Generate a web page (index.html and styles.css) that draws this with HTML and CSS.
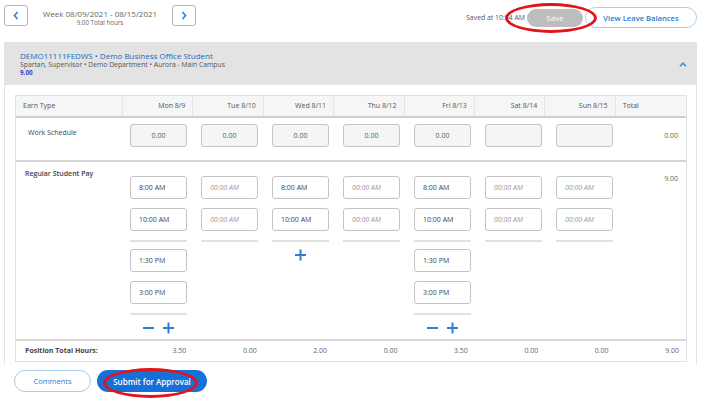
FILE: index.html
```html
<!DOCTYPE html>
<html lang="en">
<head>
	<meta charset="UTF-8">
	<title>Timesheet</title>
	<link rel="stylesheet" href="styles.css">
</head>
<body>
	<div class="topbar">
		<div class="week-nav">
			<button class="nav-btn"><svg width="6" height="9" viewBox="0 0 6 9"><path d="M4.5 1L1.5 4.5L4.5 8" fill="none" stroke="#2b7fd6" stroke-width="1.6"/></svg></button>
			<div class="week-info">
				<div class="week-range">Week 08/09/2021 - 08/15/2021</div>
				<div class="week-total">9.00 Total hours</div>
			</div>
			<button class="nav-btn"><svg width="6" height="9" viewBox="0 0 6 9"><path d="M1.5 1L4.5 4.5L1.5 8" fill="none" stroke="#2b7fd6" stroke-width="1.6"/></svg></button>
		</div>
		<div class="actions">
			<span class="saved">Saved at 10:54 AM</span>
			<span class="save-wrap">
				<button class="btn-save">Save</button>
				<span class="ring ring-save"></span>
			</span>
			<button class="btn-outline btn-leave">View Leave Balances</button>
		</div>
	</div>

	<div class="card">
		<div class="pos-head">
			<div class="pos-info">
				<div class="pos-title">DEMO11111FEDWS • Demo Business Office Student</div>
				<div class="pos-sub">Spartan, Supervisor • Demo Department • Aurora - Main Campus</div>
				<div class="pos-hours">9.00</div>
			</div>
			<svg class="collapse" width="8" height="5" viewBox="0 0 8 5"><path d="M1 4.2L4 1.2L7 4.2" fill="none" stroke="#3d8ee0" stroke-width="1.6"/></svg>
		</div>

		<div class="sheet">
			<div class="row row-head">
				<div class="cell">Earn Type</div>
				<div class="cell day">Mon 8/9</div>
				<div class="cell day">Tue 8/10</div>
				<div class="cell day">Wed 8/11</div>
				<div class="cell day">Thu 8/12</div>
				<div class="cell day">Fri 8/13</div>
				<div class="cell day">Sat 8/14</div>
				<div class="cell day">Sun 8/15</div>
				<div class="cell">Total</div>
			</div>

			<div class="row row-ws">
				<div class="cell label">Work Schedule</div>
				<div class="cell"><div class="box box-ws">0.00</div></div>
				<div class="cell"><div class="box box-ws">0.00</div></div>
				<div class="cell"><div class="box box-ws">0.00</div></div>
				<div class="cell"><div class="box box-ws">0.00</div></div>
				<div class="cell"><div class="box box-ws">0.00</div></div>
				<div class="cell"><div class="box box-ws"></div></div>
				<div class="cell"><div class="box box-ws"></div></div>
				<div class="cell total">0.00</div>
			</div>

			<div class="row row-pay">
				<div class="cell label">Regular Student Pay</div>
				<div class="cell">
					<div class="box">8:00 AM</div>
					<div class="box">10:00 AM</div>
					<div class="sep"></div>
					<div class="box">1:30 PM</div>
					<div class="box">3:00 PM</div>
					<div class="sep"></div>
					<div class="controls">
						<svg width="11" height="12" viewBox="0 0 11 12"><path d="M0 6H11" stroke="#2a7fd6" stroke-width="2"/></svg>
						<svg width="11" height="12" viewBox="0 0 11 12"><path d="M0 6H11M5.5 0.5V11.5" stroke="#2a7fd6" stroke-width="2"/></svg>
					</div>
				</div>
				<div class="cell">
					<div class="box empty">00:00 AM</div>
					<div class="box empty">00:00 AM</div>
					<div class="sep"></div>
				</div>
				<div class="cell">
					<div class="box">8:00 AM</div>
					<div class="box">10:00 AM</div>
					<div class="sep"></div>
					<div class="controls">
						<svg width="11" height="12" viewBox="0 0 11 12"><path d="M0 6H11M5.5 0.5V11.5" stroke="#2a7fd6" stroke-width="2"/></svg>
					</div>
				</div>
				<div class="cell">
					<div class="box empty">00:00 AM</div>
					<div class="box empty">00:00 AM</div>
					<div class="sep"></div>
				</div>
				<div class="cell">
					<div class="box">8:00 AM</div>
					<div class="box">10:00 AM</div>
					<div class="sep"></div>
					<div class="box">1:30 PM</div>
					<div class="box">3:00 PM</div>
					<div class="sep"></div>
					<div class="controls">
						<svg width="11" height="12" viewBox="0 0 11 12"><path d="M0 6H11" stroke="#2a7fd6" stroke-width="2"/></svg>
						<svg width="11" height="12" viewBox="0 0 11 12"><path d="M0 6H11M5.5 0.5V11.5" stroke="#2a7fd6" stroke-width="2"/></svg>
					</div>
				</div>
				<div class="cell">
					<div class="box empty">00:00 AM</div>
					<div class="box empty">00:00 AM</div>
					<div class="sep"></div>
				</div>
				<div class="cell">
					<div class="box empty">00:00 AM</div>
					<div class="box empty">00:00 AM</div>
					<div class="sep"></div>
				</div>
				<div class="cell total">9.00</div>
			</div>

			<div class="row row-sum">
				<div class="cell label">Position Total Hours:</div>
				<div class="cell num">3.50</div>
				<div class="cell num">0.00</div>
				<div class="cell num">2.00</div>
				<div class="cell num">0.00</div>
				<div class="cell num">3.50</div>
				<div class="cell num">0.00</div>
				<div class="cell num">0.00</div>
				<div class="cell num">9.00</div>
			</div>
		</div>
	</div>

	<div class="footer">
		<button class="btn-outline btn-comments">Comments</button>
		<span class="submit-wrap">
			<button class="btn-submit">Submit for Approval</button>
			<span class="ring ring-submit"></span>
		</span>
	</div>
</body>
</html>
```
FILE: styles.css
```css
*{
	margin: 0;
	padding: 0;
	box-sizing: border-box;
}
body{
	font-family: "Open Sans", "Liberation Sans", Arial, sans-serif;
	color: #444;
	background: #fff;
	width: 711px;
	height: 399px;
	overflow: hidden;
}
button{
	font-family: inherit;
	cursor: pointer;
}

/* top bar */
.topbar{
	height: 42px;
	display: flex;
	justify-content: space-between;
	align-items: flex-start;
	padding: 0 14px 0 4px;
}
.week-nav{
	display: flex;
	align-items: flex-start;
	padding-top: 5px;
}
.nav-btn{
	width: 24px;
	height: 21px;
	border: 1px solid #b8b8b8;
	border-radius: 3px;
	background: #fff;
	display: flex;
	align-items: center;
	justify-content: center;
}
.week-info{
	width: 144px;
	text-align: center;
	color: #666;
	padding-top: 3px;
}
.week-range{
	font-size: 8px;
	line-height: 11px;
}
.week-total{
	font-size: 6.2px;
	line-height: 8px;
}
.actions{
	display: flex;
	align-items: center;
	padding-top: 7px;
}
.saved{
	font-size: 6.9px;
	color: #555;
	margin-right: 2px;
}
.save-wrap, .submit-wrap{
	position: relative;
	display: inline-block;
}
.btn-save{
	width: 56px;
	height: 18px;
	border: none;
	border-radius: 9px;
	background: #bdbdbd;
	color: #fff;
	font-size: 8px;
	display: block;
}
.btn-outline{
	background: #fff;
	border: 1px solid #a9cdf0;
	color: #2f7ccf;
	font-weight: 600;
}
.btn-leave{
	width: 112px;
	height: 21px;
	border-radius: 11px;
	font-size: 7.6px;
	margin-left: 2px;
}
.ring{
	position: absolute;
	border: 3.5px solid #e2131b;
	border-radius: 50%;
	pointer-events: none;
	z-index: 2;
}
.ring-save{
	left: -22px;
	top: -6px;
	width: 92px;
	height: 30px;
}

/* position card */
.card{
	margin-left: 4px;
	width: 693px;
	border-left: 1px solid #e4e4e4;
	border-right: 1px solid #e4e4e4;
	padding-bottom: 3px;
}
.pos-head{
	height: 43px;
	background: #e3e3e3;
	display: flex;
	justify-content: space-between;
	align-items: center;
	padding: 0 9px 0 15px;
}
.pos-title{
	font-size: 8px;
	line-height: 10px;
	color: #2469b8;
}
.pos-sub{
	font-size: 6.8px;
	line-height: 8px;
	color: #555;
}
.pos-hours{
	font-size: 6.3px;
	line-height: 8px;
	font-weight: 700;
	color: #3c3cc4;
}
.collapse{
	margin-top: 2px;
}

/* timesheet table */
.sheet{
	margin: 10px 9px 0 10px;
	border: 1px solid #e0e0e0;
	border-bottom: none;
	font-size: 7px;
}
.row{
	display: grid;
	grid-template-columns: 107px repeat(8, 1fr);
}
.row-head{
	border-bottom: 2px solid #cfcfcf;
}
.row-head .cell{
	height: 20px;
	line-height: 20px;
	padding: 0 7px;
	background: #f6f6f6;
	color: #555;
	border-right: 1px solid #e4e4e4;
}
.row-head .cell:last-child{
	border-right: none;
	padding-left: 7px;
}
.row-head .day{
	text-align: right;
}
.cell{
	padding: 0 7px;
}
.label{
	color: #444;
}
.total{
	text-align: right;
	padding-right: 8px;
	color: #666;
}
.box{
	width: 57px;
	height: 23px;
	border: 1px solid #c4c4c4;
	border-radius: 3px;
	font-size: 7px;
	line-height: 21px;
	padding-left: 8px;
	color: #444;
	background: #fff;
}
.box-ws{
	background: #f5f5f5;
	text-align: center;
	padding-left: 0;
	color: #555;
}
.box.empty{
	color: #9a9a9a;
	font-style: italic;
}

.row-ws{
	height: 44px;
	border-bottom: 2px solid #d6d6d6;
}
.row-ws .cell{
	padding-top: 6px;
}
.row-ws .label{
	padding: 10px 0 0 12px;
	line-height: 9px;
}
.row-ws .total{
	padding-top: 13px;
	line-height: 9px;
}

.row-pay{
	height: 179px;
	border-bottom: 2px solid #d6d6d6;
}
.row-pay .cell{
	padding-top: 14px;
	display: flex;
	flex-direction: column;
	gap: 9px;
}
.row-pay .label{
	padding: 7px 0 0 9px;
	line-height: 9px;
	font-weight: 600;
	display: block;
}
.row-pay .total{
	padding-top: 12px;
	line-height: 9px;
	display: block;
}
.sep{
	width: 57px;
	height: 2px;
	background: #e2e2e2;
}
.box + .sep{
	margin-top: 0;
}
.sep + .box, .sep + .controls{
	margin-top: -2px;
}
.controls{
	width: 57px;
	height: 12px;
	display: flex;
	justify-content: center;
	gap: 9px;
}

.row-sum{
	height: 21px;
	border-bottom: 1px solid #e0e0e0;
}
.row-sum .cell{
	line-height: 20px;
}
.row-sum .label{
	font-weight: 700;
	padding-left: 9px;
}
.row-sum .num{
	text-align: right;
	color: #666;
}

/* footer buttons */
.footer{
	display: flex;
	align-items: center;
	gap: 6px;
	padding: 5px 0 0 14px;
}
.btn-comments{
	width: 77px;
	height: 22px;
	border-radius: 11px;
	font-size: 7.5px;
	font-weight: 400;
}
.btn-submit{
	width: 110px;
	height: 22px;
	border: none;
	border-radius: 11px;
	background: #1670d8;
	color: #fff;
	font-size: 8px;
	font-weight: 600;
	display: block;
}
.ring-submit{
	left: 6px;
	top: -2px;
	width: 95px;
	height: 30px;
}
```
